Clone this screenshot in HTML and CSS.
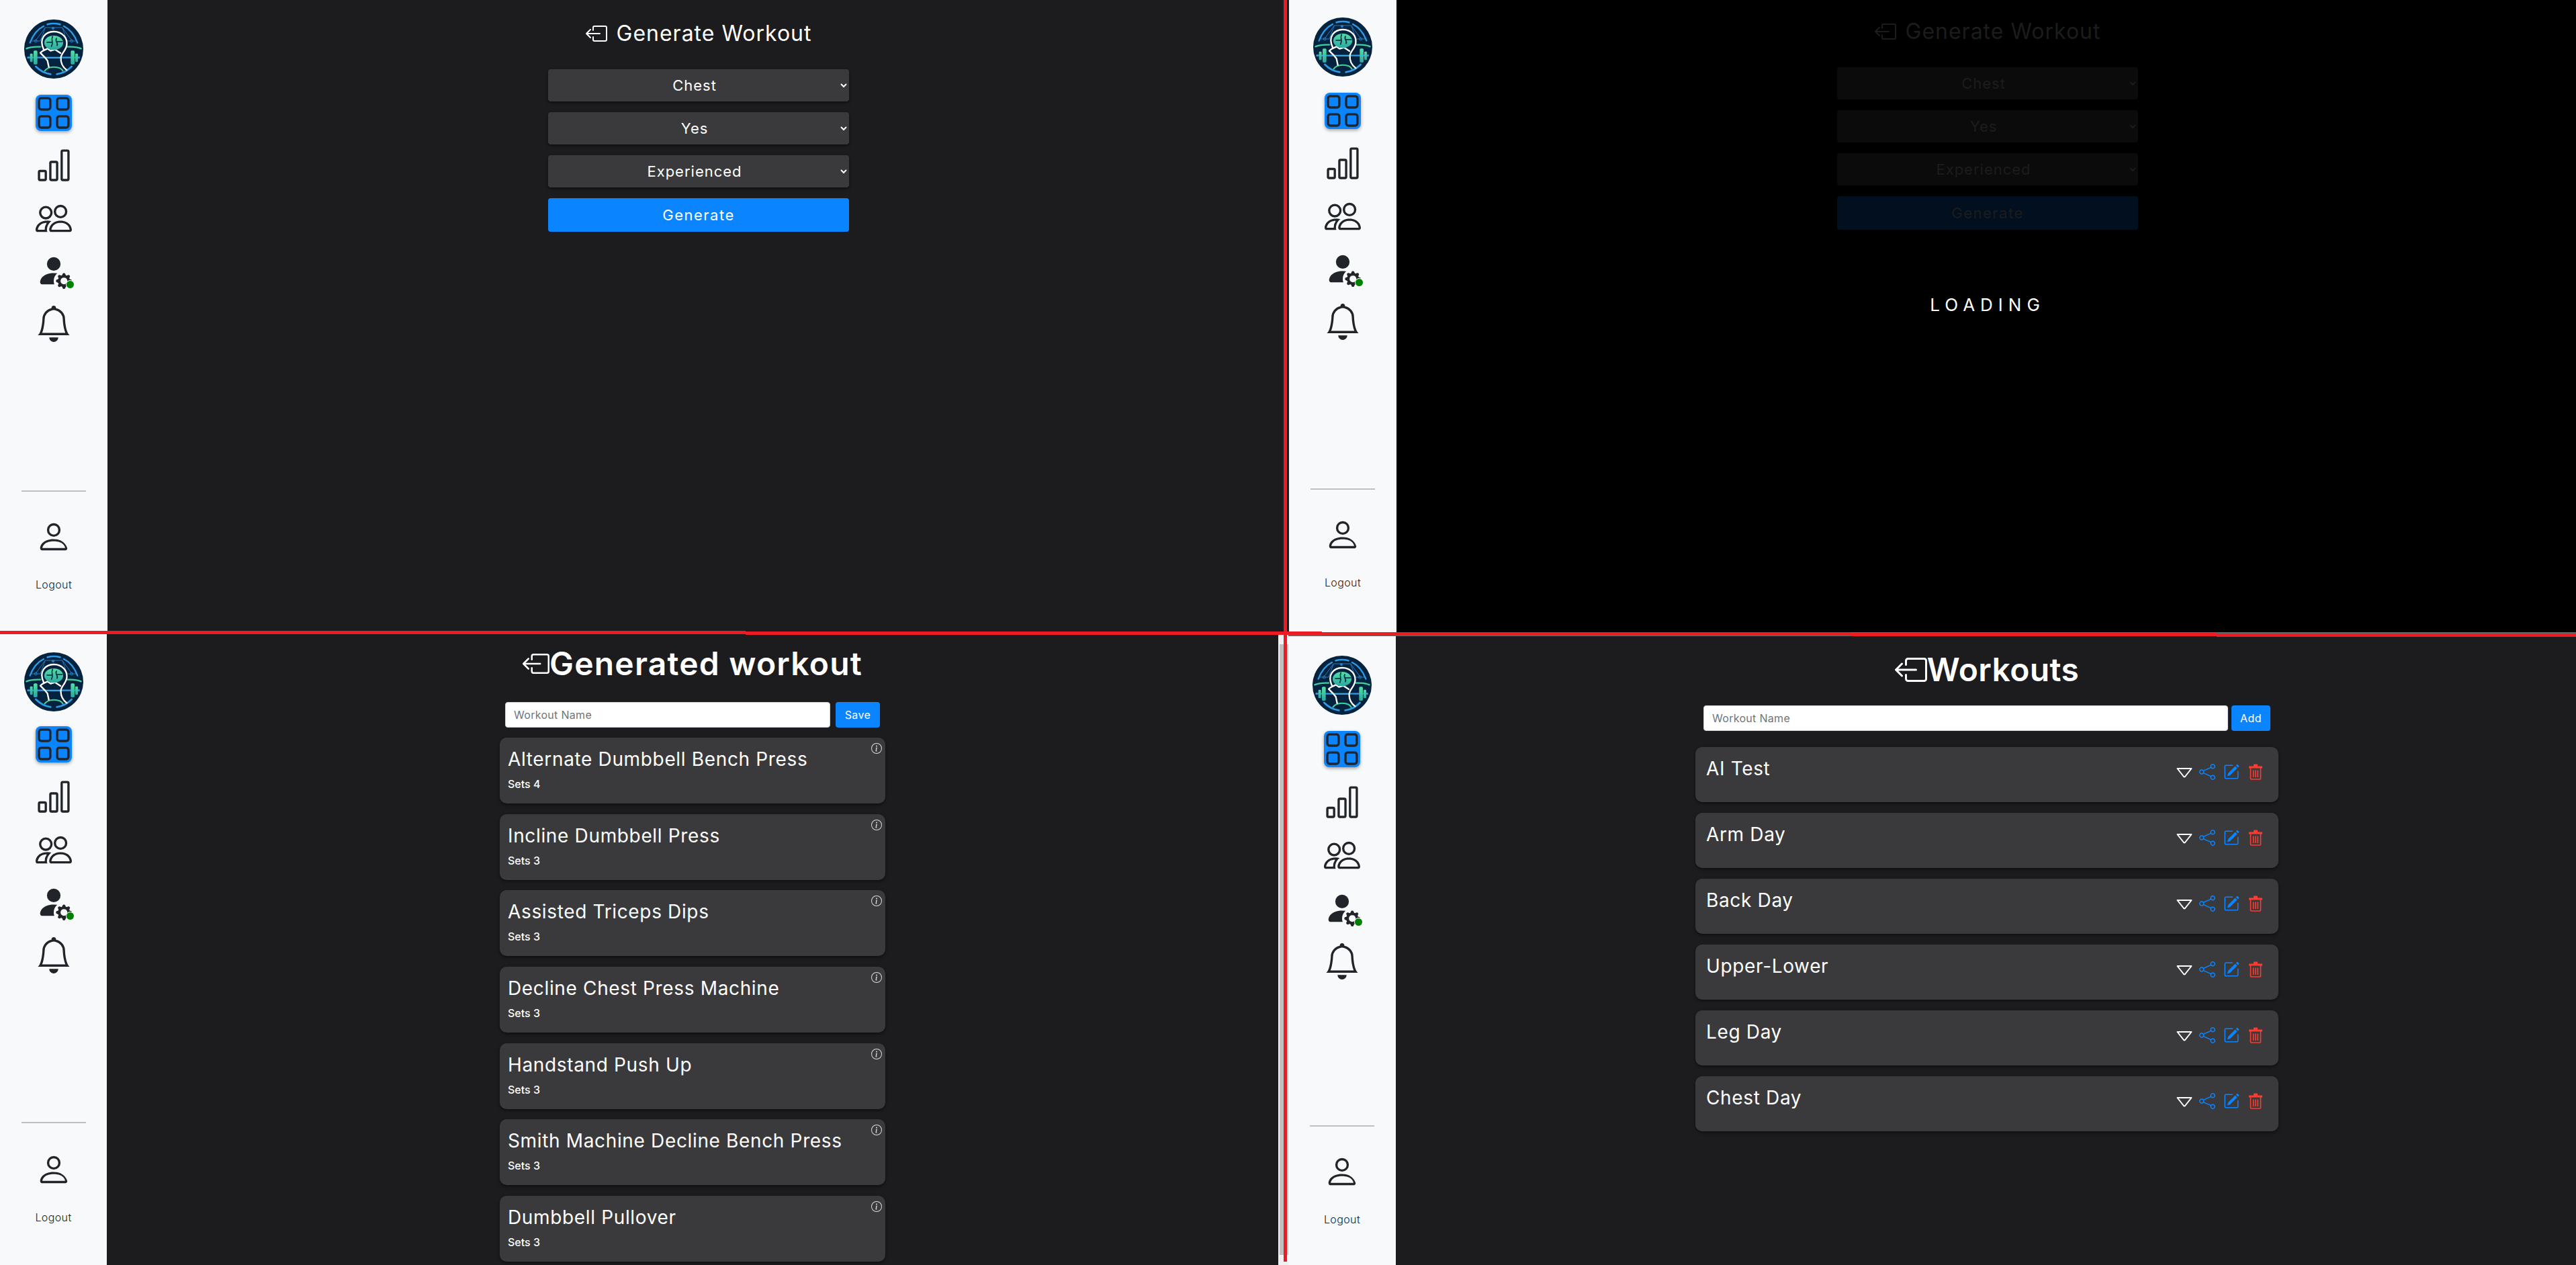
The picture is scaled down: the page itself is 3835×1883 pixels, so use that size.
FILE: index.html
```html
<!DOCTYPE html>
<html lang="en">
<head>
    <meta charset="UTF-8">
    <meta name="viewport" content="width=device-width, initial-scale=1.0">
    <title>Workout Generator</title>
    <link rel="stylesheet" href="styles.css">
</head>
<body>
    <svg class="defs" width="0" height="0">
        <defs>
            <linearGradient id="green" x1="0" y1="0" x2="0" y2="1">
                <stop offset="0" stop-color="#52dfa6"/>
                <stop offset="1" stop-color="#2aa8a0"/>
            </linearGradient>
            <symbol id="logo" viewBox="78 56 264 264">
                <circle cx="210" cy="188" r="132" fill="#05233f"/>
                <g fill="none" stroke="#2f9be6" stroke-linecap="round">
                    <path d="M182 78Q210 70 238 78" stroke-width="8"/>
                    <path d="M165 86Q125 105 104 160" stroke-width="7"/>
                    <path d="M255 86Q295 105 316 160" stroke-width="7"/>
                    <path d="M130 266Q160 296 196 300" stroke-width="8"/>
                    <path d="M290 266Q260 296 224 300" stroke-width="8"/>
                    <path d="M98 226H322" stroke-width="7"/>
                </g>
                <g fill="none" stroke="#2a78b8" stroke-width="3">
                    <path d="M172 92H248L292 152M172 92L128 152M172 92L150 152H110M248 92L270 152H310"/>
                    <circle cx="130" cy="152" r="6"/>
                    <circle cx="290" cy="152" r="6"/>
                    <circle cx="207" cy="95" r="5" fill="#2a78b8"/>
                </g>
                <g fill="none" stroke="#3fd0a0" stroke-linecap="round">
                    <path d="M88 186Q110 176 150 178" stroke-width="7"/>
                    <path d="M272 178Q310 176 332 186" stroke-width="7"/>
                </g>
                <g fill="url(#green)">
                    <rect x="104" y="208" width="12" height="38" rx="4"/>
                    <rect x="120" y="195" width="17" height="62" rx="5"/>
                    <rect x="286" y="195" width="17" height="62" rx="5"/>
                    <rect x="306" y="208" width="12" height="38" rx="4"/>
                </g>
                <circle cx="96" cy="226" r="5" fill="#2f9be6"/>
                <circle cx="322" cy="226" r="5" fill="#2f9be6"/>
                <path d="M165 190C140 140 175 110 210 110C250 110 272 140 268 170C265 195 245 205 242 225C240 250 252 270 268 282L187 282V262L182 240L150 205Z" fill="#05233f"/>
                <rect x="168" y="223" width="72" height="7" fill="#3aa6e0"/>
                <path d="M168 288Q180 268 210 268Q244 268 252 288" fill="none" stroke="#3fd0a0" stroke-width="6"/>
                <path d="M166 192C140 140 175 110 210 110C250 110 272 140 268 170C265 195 245 205 242 225C240 250 252 270 268 282M166 192L150 205L170 225L182 240L188 268M160 197L182 186L196 196L216 190L240 206" fill="none" stroke="#fff" stroke-width="7" stroke-linejoin="round" stroke-linecap="round"/>
                <ellipse cx="210" cy="160" rx="42" ry="32" fill="url(#green)"/>
                <path d="M205 132C195 150 212 155 200 176M180 158H200M222 140C214 155 232 160 225 172M225 155H248" fill="none" stroke="#05233f" stroke-width="5" stroke-linecap="round"/>
            </symbol>
            <symbol id="i-back" viewBox="0 0 16 16">
                <path d="M6 12.5a.5.5 0 0 0 .5.5h8a.5.5 0 0 0 .5-.5v-9a.5.5 0 0 0-.5-.5h-8a.5.5 0 0 0-.5.5v2a.5.5 0 0 1-1 0v-2A1.5 1.5 0 0 1 6.5 2h8A1.5 1.5 0 0 1 16 3.5v9a1.5 1.5 0 0 1-1.5 1.5h-8A1.5 1.5 0 0 1 5 12.5v-2a.5.5 0 0 1 1 0z"/>
                <path d="M.146 8.354a.5.5 0 0 1 0-.708l3-3a.5.5 0 1 1 .708.708L1.707 7.5H10.5a.5.5 0 0 1 0 1H1.707l2.147 2.146a.5.5 0 0 1-.708.708z"/>
            </symbol>
            <symbol id="i-grid" viewBox="0 0 16 16">
                <path d="M1 2.5A1.5 1.5 0 0 1 2.5 1h3A1.5 1.5 0 0 1 7 2.5v3A1.5 1.5 0 0 1 5.5 7h-3A1.5 1.5 0 0 1 1 5.5zM2.5 2a.5.5 0 0 0-.5.5v3a.5.5 0 0 0 .5.5h3a.5.5 0 0 0 .5-.5v-3a.5.5 0 0 0-.5-.5zm6.5.5A1.5 1.5 0 0 1 10.5 1h3A1.5 1.5 0 0 1 15 2.5v3A1.5 1.5 0 0 1 13.5 7h-3A1.5 1.5 0 0 1 9 5.5zm1.5-.5a.5.5 0 0 0-.5.5v3a.5.5 0 0 0 .5.5h3a.5.5 0 0 0 .5-.5v-3a.5.5 0 0 0-.5-.5zM1 10.5A1.5 1.5 0 0 1 2.5 9h3A1.5 1.5 0 0 1 7 10.5v3A1.5 1.5 0 0 1 5.5 15h-3A1.5 1.5 0 0 1 1 13.5zm1.5-.5a.5.5 0 0 0-.5.5v3a.5.5 0 0 0 .5.5h3a.5.5 0 0 0 .5-.5v-3a.5.5 0 0 0-.5-.5zm6.5.5A1.5 1.5 0 0 1 10.5 9h3a1.5 1.5 0 0 1 1.5 1.5v3a1.5 1.5 0 0 1-1.5 1.5h-3A1.5 1.5 0 0 1 9 13.5zm1.5-.5a.5.5 0 0 0-.5.5v3a.5.5 0 0 0 .5.5h3a.5.5 0 0 0 .5-.5v-3a.5.5 0 0 0-.5-.5z"/>
            </symbol>
            <symbol id="i-bars" viewBox="0 0 16 16">
                <path d="M4 11H2v3h2zm5-4H7v7h2zm5-5v12h-2V2zm-2-1a1 1 0 0 0-1 1v12a1 1 0 0 0 1 1h2a1 1 0 0 0 1-1V2a1 1 0 0 0-1-1zM6 7a1 1 0 0 1 1-1h2a1 1 0 0 1 1 1v7a1 1 0 0 1-1 1H7a1 1 0 0 1-1-1zm-5 4a1 1 0 0 1 1-1h2a1 1 0 0 1 1 1v3a1 1 0 0 1-1 1H2a1 1 0 0 1-1-1z"/>
            </symbol>
            <symbol id="i-people" viewBox="0 0 16 16">
                <path d="M15 14s1 0 1-1-1-4-5-4-5 3-5 4 1 1 1 1zm-7.978-1L7 12.996c.001-.264.167-1.03.76-1.72C8.312 10.629 9.282 10 11 10c1.717 0 2.687.63 3.24 1.276.593.69.758 1.457.76 1.72l-.008.002-.014.002zM11 7a2 2 0 1 0 0-4 2 2 0 0 0 0 4m3-2a3 3 0 1 1-6 0 3 3 0 0 1 6 0M6.936 9.28a6 6 0 0 0-1.23-.247A7 7 0 0 0 5 9c-4 0-5 3-5 4q0 1 1 1h4.216A2.24 2.24 0 0 1 5 13c0-1.01.377-2.042 1.09-2.904.243-.294.526-.569.846-.816M4.92 10A5.5 5.5 0 0 0 4 13H1c0-.26.164-1.03.76-1.724.545-.636 1.492-1.256 3.16-1.275ZM1.5 5.5a3 3 0 1 1 6 0 3 3 0 0 1-6 0m3-2a2 2 0 1 0 0 4 2 2 0 0 0 0-4"/>
            </symbol>
            <symbol id="i-gear" viewBox="0 0 16 16">
                <path d="M11 5a3 3 0 1 1-6 0 3 3 0 0 1 6 0m-9 8c0 1 1 1 1 1h5.256A4.5 4.5 0 0 1 8 12.5a4.5 4.5 0 0 1 1.544-3.393Q8.844 9.002 8 9c-5 0-6 3-6 4m9.886-3.54c.18-.613 1.048-.613 1.229 0l.043.148a.64.64 0 0 0 .921.382l.136-.074c.561-.306 1.175.308.87.869l-.075.136a.64.64 0 0 0 .382.92l.149.045c.612.18.612 1.048 0 1.229l-.15.043a.64.64 0 0 0-.38.921l.074.136c.305.561-.309 1.175-.87.87l-.136-.075a.64.64 0 0 0-.92.382l-.045.149c-.18.612-1.048.612-1.229 0l-.043-.15a.64.64 0 0 0-.921-.38l-.136.074c-.561.305-1.175-.309-.87-.87l.075-.136a.64.64 0 0 0-.382-.92l-.148-.045c-.613-.18-.613-1.048 0-1.229l.148-.043a.64.64 0 0 0 .382-.921l-.074-.136c-.306-.561.308-1.175.869-.87l.136.075a.64.64 0 0 0 .92-.382zM14 12.5a1.5 1.5 0 1 0-3 0 1.5 1.5 0 0 0 3 0"/>
            </symbol>
            <symbol id="i-bell" viewBox="0 0 16 16">
                <path d="M8 16a2 2 0 0 0 2-2H6a2 2 0 0 0 2 2M8 1.918l-.797.161A4 4 0 0 0 4 6c0 .628-.134 2.197-.459 3.742-.16.767-.376 1.566-.663 2.258h10.244c-.287-.692-.502-1.49-.663-2.258C12.134 8.197 12 6.628 12 6a4 4 0 0 0-3.203-3.92zM14.22 12c.223.447.481.801.78 1H1c.299-.199.557-.553.78-1C2.68 10.2 3 6.88 3 6c0-2.42 1.72-4.44 4.005-4.901a1 1 0 1 1 1.99 0A5 5 0 0 1 13 6c0 .88.32 4.2 1.22 6"/>
            </symbol>
            <symbol id="i-person" viewBox="0 0 16 16">
                <path d="M8 8a3 3 0 1 0 0-6 3 3 0 0 0 0 6m2-3a2 2 0 1 1-4 0 2 2 0 0 1 4 0m4 8c0 1-1 1-1 1H3s-1 0-1-1 1-4 6-4 6 4 6 4m-1-.004c-.001-.246-.154-.986-.832-1.664C11.516 10.68 10.289 10 8 10s-3.516.68-4.168 1.332c-.678.678-.83 1.418-.832 1.664z"/>
            </symbol>
            <symbol id="i-info" viewBox="0 0 16 16">
                <path d="M8 15A7 7 0 1 1 8 1a7 7 0 0 1 0 14m0 1A8 8 0 1 0 8 0a8 8 0 0 0 0 16"/>
                <path d="m8.93 6.588-2.29.287-.082.38.45.083c.294.07.352.176.288.469l-.738 3.468c-.194.897.105 1.319.808 1.319.545 0 1.178-.252 1.465-.598l.088-.416c-.2.176-.492.246-.686.246-.275 0-.375-.193-.304-.533zM9 4.5a1 1 0 1 1-2 0 1 1 0 0 1 2 0"/>
            </symbol>
            <symbol id="i-caret" viewBox="0 0 24 24">
                <path d="M1.5 7H22.5L13 19Q12 20 11 19Z" fill="none" stroke="currentColor" stroke-width="2" stroke-linejoin="round"/>
            </symbol>
            <symbol id="i-share" viewBox="0 0 16 16">
                <path d="M13.5 1a1.5 1.5 0 1 0 0 3 1.5 1.5 0 0 0 0-3M11 2.5a2.5 2.5 0 1 1 .603 1.628l-6.718 3.12a2.5 2.5 0 0 1 0 1.504l6.718 3.12a2.5 2.5 0 1 1-.488.876l-6.718-3.12a2.5 2.5 0 1 1 0-3.256l6.718-3.12A2.5 2.5 0 0 1 11 2.5m-8.5 4a1.5 1.5 0 1 0 0 3 1.5 1.5 0 0 0 0-3m11 5.5a1.5 1.5 0 1 0 0 3 1.5 1.5 0 0 0 0-3"/>
            </symbol>
            <symbol id="i-edit" viewBox="0 0 16 16">
                <path d="M15.502 1.94a.5.5 0 0 1 0 .706L14.459 3.69l-2-2L13.502.646a.5.5 0 0 1 .707 0l1.293 1.293zm-1.75 2.456-2-2L4.939 9.21a.5.5 0 0 0-.121.196l-.805 2.414a.25.25 0 0 0 .316.316l2.414-.805a.5.5 0 0 0 .196-.12l6.813-6.814z"/>
                <path d="M1 13.5A1.5 1.5 0 0 0 2.5 15h11a1.5 1.5 0 0 0 1.5-1.5v-6a.5.5 0 0 0-1 0v6a.5.5 0 0 1-.5.5h-11a.5.5 0 0 1-.5-.5v-11a.5.5 0 0 1 .5-.5H9a.5.5 0 0 0 0-1H2.5A1.5 1.5 0 0 0 1 2.5z"/>
            </symbol>
            <symbol id="i-trash" viewBox="0 0 24 24">
                <path d="M2 3.5H22V6.5H2ZM9 3.5V1.5Q9 .5 10 .5H14Q15 .5 15 1.5V3.5" fill="currentColor"/>
                <path d="M4.5 6V22Q4.5 23 5.5 23H18.5Q19.5 23 19.5 22V6" fill="none" stroke="currentColor" stroke-width="1.6"/>
                <path d="M8.7 9.5V20M12 9.5V20M15.3 9.5V20" fill="none" stroke="currentColor" stroke-width="1.6"/>
            </symbol>
        </defs>
    </svg>

    <div class="collage">
        <div class="row row-top">
            <section class="panel panel-generate">
                <aside class="sidebar">
                    <svg class="logo"><use href="#logo"/></svg>
                    <nav class="nav">
                        <svg class="nav-icon active"><use href="#i-grid"/></svg>
                        <svg class="nav-icon"><use href="#i-bars"/></svg>
                        <svg class="nav-icon"><use href="#i-people"/></svg>
                        <span class="gear-wrap"><svg class="nav-icon"><use href="#i-gear"/></svg><span class="dot"></span></span>
                        <svg class="nav-icon"><use href="#i-bell"/></svg>
                    </nav>
                    <div class="sidebar-foot">
                        <hr class="divider">
                        <svg class="nav-icon"><use href="#i-person"/></svg>
                        <span class="logout">Logout</span>
                    </div>
                </aside>
                <main class="main">
                    <h2 class="title"><svg class="back"><use href="#i-back"/></svg>Generate Workout</h2>
                    <form class="gen-form">
                        <select class="field"><option>Chest</option></select>
                        <select class="field"><option>Yes</option></select>
                        <select class="field"><option>Experienced</option></select>
                        <button class="gen-btn" type="button">Generate</button>
                    </form>
                </main>
            </section>

            <section class="panel panel-loading">
                <aside class="sidebar">
                    <svg class="logo"><use href="#logo"/></svg>
                    <nav class="nav">
                        <svg class="nav-icon active"><use href="#i-grid"/></svg>
                        <svg class="nav-icon"><use href="#i-bars"/></svg>
                        <svg class="nav-icon"><use href="#i-people"/></svg>
                        <span class="gear-wrap"><svg class="nav-icon"><use href="#i-gear"/></svg><span class="dot"></span></span>
                        <svg class="nav-icon"><use href="#i-bell"/></svg>
                    </nav>
                    <div class="sidebar-foot">
                        <hr class="divider">
                        <svg class="nav-icon"><use href="#i-person"/></svg>
                        <span class="logout">Logout</span>
                    </div>
                </aside>
                <main class="main">
                    <h2 class="title"><svg class="back"><use href="#i-back"/></svg>Generate Workout</h2>
                    <form class="gen-form">
                        <select class="field"><option>Chest</option></select>
                        <select class="field"><option>Yes</option></select>
                        <select class="field"><option>Experienced</option></select>
                        <button class="gen-btn" type="button">Generate</button>
                    </form>
                    <p class="loading">LOADING</p>
                </main>
            </section>
        </div>

        <div class="row row-bottom">
            <section class="panel panel-generated">
                <aside class="sidebar">
                    <svg class="logo"><use href="#logo"/></svg>
                    <nav class="nav">
                        <svg class="nav-icon active"><use href="#i-grid"/></svg>
                        <svg class="nav-icon"><use href="#i-bars"/></svg>
                        <svg class="nav-icon"><use href="#i-people"/></svg>
                        <span class="gear-wrap"><svg class="nav-icon"><use href="#i-gear"/></svg><span class="dot"></span></span>
                        <svg class="nav-icon"><use href="#i-bell"/></svg>
                    </nav>
                    <div class="sidebar-foot">
                        <hr class="divider">
                        <svg class="nav-icon"><use href="#i-person"/></svg>
                        <span class="logout">Logout</span>
                    </div>
                </aside>
                <main class="main">
                    <h1 class="title title-big"><svg class="back"><use href="#i-back"/></svg>Generated workout</h1>
                    <div class="name-row">
                        <input class="name-input" type="text" placeholder="Workout Name">
                        <button class="small-btn" type="button">Save</button>
                    </div>
                    <div class="cards">
                        <div class="card"><svg class="info"><use href="#i-info"/></svg><h3>Alternate Dumbbell Bench Press</h3><p>Sets 4</p></div>
                        <div class="card"><svg class="info"><use href="#i-info"/></svg><h3>Incline Dumbbell Press</h3><p>Sets 3</p></div>
                        <div class="card"><svg class="info"><use href="#i-info"/></svg><h3>Assisted Triceps Dips</h3><p>Sets 3</p></div>
                        <div class="card"><svg class="info"><use href="#i-info"/></svg><h3>Decline Chest Press Machine</h3><p>Sets 3</p></div>
                        <div class="card"><svg class="info"><use href="#i-info"/></svg><h3>Handstand Push Up</h3><p>Sets 3</p></div>
                        <div class="card"><svg class="info"><use href="#i-info"/></svg><h3>Smith Machine Decline Bench Press</h3><p>Sets 3</p></div>
                        <div class="card"><svg class="info"><use href="#i-info"/></svg><h3>Dumbbell Pullover</h3><p>Sets 3</p></div>
                    </div>
                </main>
                <div class="scrollbar"><span class="scroll-thumb"></span></div>
            </section>

            <section class="panel panel-workouts">
                <aside class="sidebar">
                    <svg class="logo"><use href="#logo"/></svg>
                    <nav class="nav">
                        <svg class="nav-icon active"><use href="#i-grid"/></svg>
                        <svg class="nav-icon"><use href="#i-bars"/></svg>
                        <svg class="nav-icon"><use href="#i-people"/></svg>
                        <span class="gear-wrap"><svg class="nav-icon"><use href="#i-gear"/></svg><span class="dot"></span></span>
                        <svg class="nav-icon"><use href="#i-bell"/></svg>
                    </nav>
                    <div class="sidebar-foot">
                        <hr class="divider">
                        <svg class="nav-icon"><use href="#i-person"/></svg>
                        <span class="logout">Logout</span>
                    </div>
                </aside>
                <main class="main">
                    <h1 class="title title-big"><svg class="back"><use href="#i-back"/></svg>Workouts</h1>
                    <div class="name-row">
                        <input class="name-input" type="text" placeholder="Workout Name">
                        <button class="small-btn" type="button">Add</button>
                    </div>
                    <div class="cards">
                        <div class="card"><h3>AI Test</h3><div class="actions"><svg class="caret"><use href="#i-caret"/></svg><svg class="act blue"><use href="#i-share"/></svg><svg class="act blue"><use href="#i-edit"/></svg><svg class="act red"><use href="#i-trash"/></svg></div></div>
                        <div class="card"><h3>Arm Day</h3><div class="actions"><svg class="caret"><use href="#i-caret"/></svg><svg class="act blue"><use href="#i-share"/></svg><svg class="act blue"><use href="#i-edit"/></svg><svg class="act red"><use href="#i-trash"/></svg></div></div>
                        <div class="card"><h3>Back Day</h3><div class="actions"><svg class="caret"><use href="#i-caret"/></svg><svg class="act blue"><use href="#i-share"/></svg><svg class="act blue"><use href="#i-edit"/></svg><svg class="act red"><use href="#i-trash"/></svg></div></div>
                        <div class="card"><h3>Upper-Lower</h3><div class="actions"><svg class="caret"><use href="#i-caret"/></svg><svg class="act blue"><use href="#i-share"/></svg><svg class="act blue"><use href="#i-edit"/></svg><svg class="act red"><use href="#i-trash"/></svg></div></div>
                        <div class="card"><h3>Leg Day</h3><div class="actions"><svg class="caret"><use href="#i-caret"/></svg><svg class="act blue"><use href="#i-share"/></svg><svg class="act blue"><use href="#i-edit"/></svg><svg class="act red"><use href="#i-trash"/></svg></div></div>
                        <div class="card"><h3>Chest Day</h3><div class="actions"><svg class="caret"><use href="#i-caret"/></svg><svg class="act blue"><use href="#i-share"/></svg><svg class="act blue"><use href="#i-edit"/></svg><svg class="act red"><use href="#i-trash"/></svg></div></div>
                    </div>
                </main>
            </section>
        </div>

        <span class="seam seam-v"></span>
        <span class="seam seam-h1"></span>
        <span class="seam seam-h2"></span>
        <span class="seam seam-h3"></span>
        <span class="seam seam-h4"></span>
        <span class="seam seam-h5"></span>
    </div>
</body>
</html>
```

FILE: styles.css
```css
* {
    box-sizing: border-box;
}

body {
    margin: 0;
    background-color: #1c1c1e;
    font-family: Inter, "Noto Sans", sans-serif;
    overflow: hidden;
}

.defs {
    position: absolute;
}

.collage {
    position: relative;
    width: 3835px;
    height: 1883px;
    overflow: hidden;
}

.row {
    display: flex;
}

.row-top {
    height: 941px;
}

.row-bottom {
    height: 942px;
}

.panel {
    display: flex;
    height: 100%;
    overflow: hidden;
    background-color: #1c1c1e;
}

.panel-generate {
    width: 1919px;
}

.panel-loading {
    flex: 1;
    background-color: #000;
}

.panel-generated {
    width: 1918px;
}

.panel-workouts {
    flex: 1;
    border-top: 6px solid #666;
}

/* sidebar */
.sidebar {
    flex: none;
    display: flex;
    flex-direction: column;
    align-items: center;
    width: 160px;
    padding-top: 29px;
    background-color: #f8f9fa;
    color: #212529;
}

.panel-loading .sidebar {
    padding-top: 26px;
}

.panel-generated .sidebar {
    padding-top: 30px;
    width: 159px;
}

.panel-workouts .sidebar {
    padding-top: 29px;
}

.logo {
    flex: none;
    width: 88px;
    height: 88px;
}

.nav {
    display: flex;
    flex-direction: column;
    align-items: center;
    gap: 24.5px;
    margin-top: 23.5px;
}

.panel-generated .nav {
    margin-top: 21.5px;
}

.panel-workouts .nav {
    gap: 25px;
}

.nav-icon {
    display: block;
    flex: none;
    width: 54px;
    height: 54px;
    fill: #212529;
}

.nav-icon.active {
    fill: #212529;
    background-color: #0a84ff;
    border-radius: 8px;
    box-shadow: 0 2px 5px rgba(0, 0, 0, 0.35);
}

.gear-wrap {
    position: relative;
    display: block;
}

.dot {
    position: absolute;
    right: -3px;
    bottom: 1px;
    width: 11px;
    height: 11px;
    border-radius: 50%;
    background-color: #008000;
    box-shadow: 0 0 0 1px #fff;
}

.sidebar-foot {
    display: flex;
    flex-direction: column;
    align-items: center;
    margin-top: 221px;
}

.panel-workouts .sidebar-foot {
    margin-top: 217px;
}

.divider {
    width: 96px;
    height: 2px;
    margin: 0 0 40px;
    border: none;
    background-color: #bfbfbf;
}

.panel-generated .divider {
    margin-bottom: 42px;
}

.logout {
    margin-top: 33px;
    font-size: 16px;
    line-height: 22px;
    font-weight: 300;
    letter-spacing: 0.4px;
}

/* main column */
.main {
    flex: none;
    display: flex;
    flex-direction: column;
    align-items: center;
    width: 1760px;
    padding-top: 26px;
    color: #fff;
}

.panel-loading .main {
    padding-top: 23px;
}

.panel-generated .main {
    width: 1744px;
    padding-top: 11px;
}

.panel-workouts .main {
    padding-top: 14px;
}

.title {
    display: flex;
    align-items: center;
    gap: 14px;
    margin: 0 0 29px;
    font-size: 32px;
    line-height: 48px;
    font-weight: 400;
    letter-spacing: 1px;
}

.title-big {
    gap: 0;
    margin-bottom: 21px;
    font-size: 48px;
    line-height: 72px;
    font-weight: 600;
    letter-spacing: 1.2px;
}

.panel-workouts .title-big {
    margin-bottom: 17px;
    letter-spacing: 0.4px;
}

.back {
    flex: none;
    width: 32px;
    height: 32px;
    fill: #fff;
}

.panel-generated .back {
    width: 40px;
    height: 40px;
}

.panel-workouts .back {
    width: 48px;
    height: 48px;
}

/* generate form */
.gen-form {
    display: flex;
    flex-direction: column;
    gap: 16px;
    width: 448px;
}

.field {
    height: 48px;
    padding: 0 8px;
    border: none;
    border-radius: 4px;
    background-color: #3a3a3c;
    box-shadow: 0 2px 4px rgba(0, 0, 0, 0.5);
    color: #fff;
    font-family: inherit;
    font-size: 22px;
    letter-spacing: 1px;
    text-align: center;
}

.gen-btn {
    height: 50px;
    border: none;
    border-radius: 4px;
    background-color: #0a84ff;
    color: #fff;
    font-family: inherit;
    font-size: 22px;
    letter-spacing: 1.5px;
}

.panel-loading .title {
    color: #1c1c1c;
}

.panel-loading .back {
    fill: #1c1c1c;
}

.panel-loading .field {
    background-color: #0b0b0c;
    box-shadow: none;
    color: #1c1c1c;
}

.panel-loading .gen-btn {
    background-color: #020f1f;
    color: #1c1c1c;
}

.loading {
    margin: 96px 0 0;
    font-size: 26px;
    line-height: 32px;
    letter-spacing: 8px;
    font-weight: 400;
}

/* name row */
.name-row {
    display: flex;
    gap: 8px;
    width: 558px;
    height: 38px;
    margin-bottom: 15px;
}

.panel-workouts .name-row {
    gap: 5px;
    width: 844px;
    margin-bottom: 24px;
}

.name-input {
    flex: 1;
    min-width: 0;
    padding: 0 12px;
    border: 1px solid #ced4da;
    border-radius: 4px;
    background-color: #fff;
    font-family: inherit;
    font-size: 16px;
    letter-spacing: 0.3px;
}

.name-input::placeholder {
    color: #6c757d;
}

.small-btn {
    flex: none;
    width: 66px;
    border: none;
    border-radius: 4px;
    background-color: #0a84ff;
    color: #fff;
    font-family: inherit;
    font-size: 16px;
    letter-spacing: 0.4px;
}

.panel-workouts .small-btn {
    width: 58px;
}

/* cards */
.cards {
    display: flex;
    flex-direction: column;
    gap: 15.7px;
    width: 574px;
}

.panel-workouts .cards {
    gap: 16px;
    width: 868px;
}

.card {
    position: relative;
    flex: none;
    height: 98px;
    padding: 11px 12px;
    border-radius: 10px;
    background-color: #3a3a3c;
    box-shadow: 0 2px 4px rgba(0, 0, 0, 0.5);
}

.panel-workouts .card {
    display: flex;
    justify-content: space-between;
    height: 82px;
    padding: 11px 22px 0 16px;
}

.card h3 {
    margin: 0;
    font-size: 28px;
    line-height: 42px;
    font-weight: 400;
    letter-spacing: 0.65px;
}

.card p {
    margin: 4px 0 0;
    font-size: 16px;
    line-height: 24px;
    font-weight: 500;
}

.info {
    position: absolute;
    top: 8px;
    right: 5px;
    width: 16px;
    height: 16px;
    fill: #ddd;
}

.actions {
    display: flex;
    gap: 12px;
    align-items: center;
    height: 54px;
    margin-top: -1px;
}

.caret {
    width: 24px;
    height: 24px;
    margin-right: -2px;
    color: #fff;
}

.act {
    width: 24px;
    height: 24px;
}

.blue {
    fill: #0a84ff;
}

.red {
    color: #ff3b30;
}

/* scrollbar of the generated workout window */
.scrollbar {
    flex: none;
    width: 15px;
    height: 100%;
    padding: 18px 0 0 2px;
    background-color: #f1f1f1;
}

.scroll-thumb {
    display: block;
    height: 909px;
    background-color: #c1c1c1;
}

/* red lines the collage was cut along */
.seam {
    position: absolute;
    height: 5px;
    background-color: #ed1c24;
}

.seam-v {
    left: 1911px;
    top: 0;
    width: 5px;
    height: 1878px;
}

.seam-h1 {
    left: 0;
    top: 939px;
    width: 1110px;
}

.seam-h2 {
    left: 1110px;
    top: 940px;
    width: 858px;
}

.seam-h3 {
    left: 1968px;
    top: 941px;
    width: 787px;
}

.seam-h4 {
    left: 2755px;
    top: 942px;
    width: 545px;
}

.seam-h5 {
    left: 3300px;
    top: 943px;
    width: 535px;
}
```
